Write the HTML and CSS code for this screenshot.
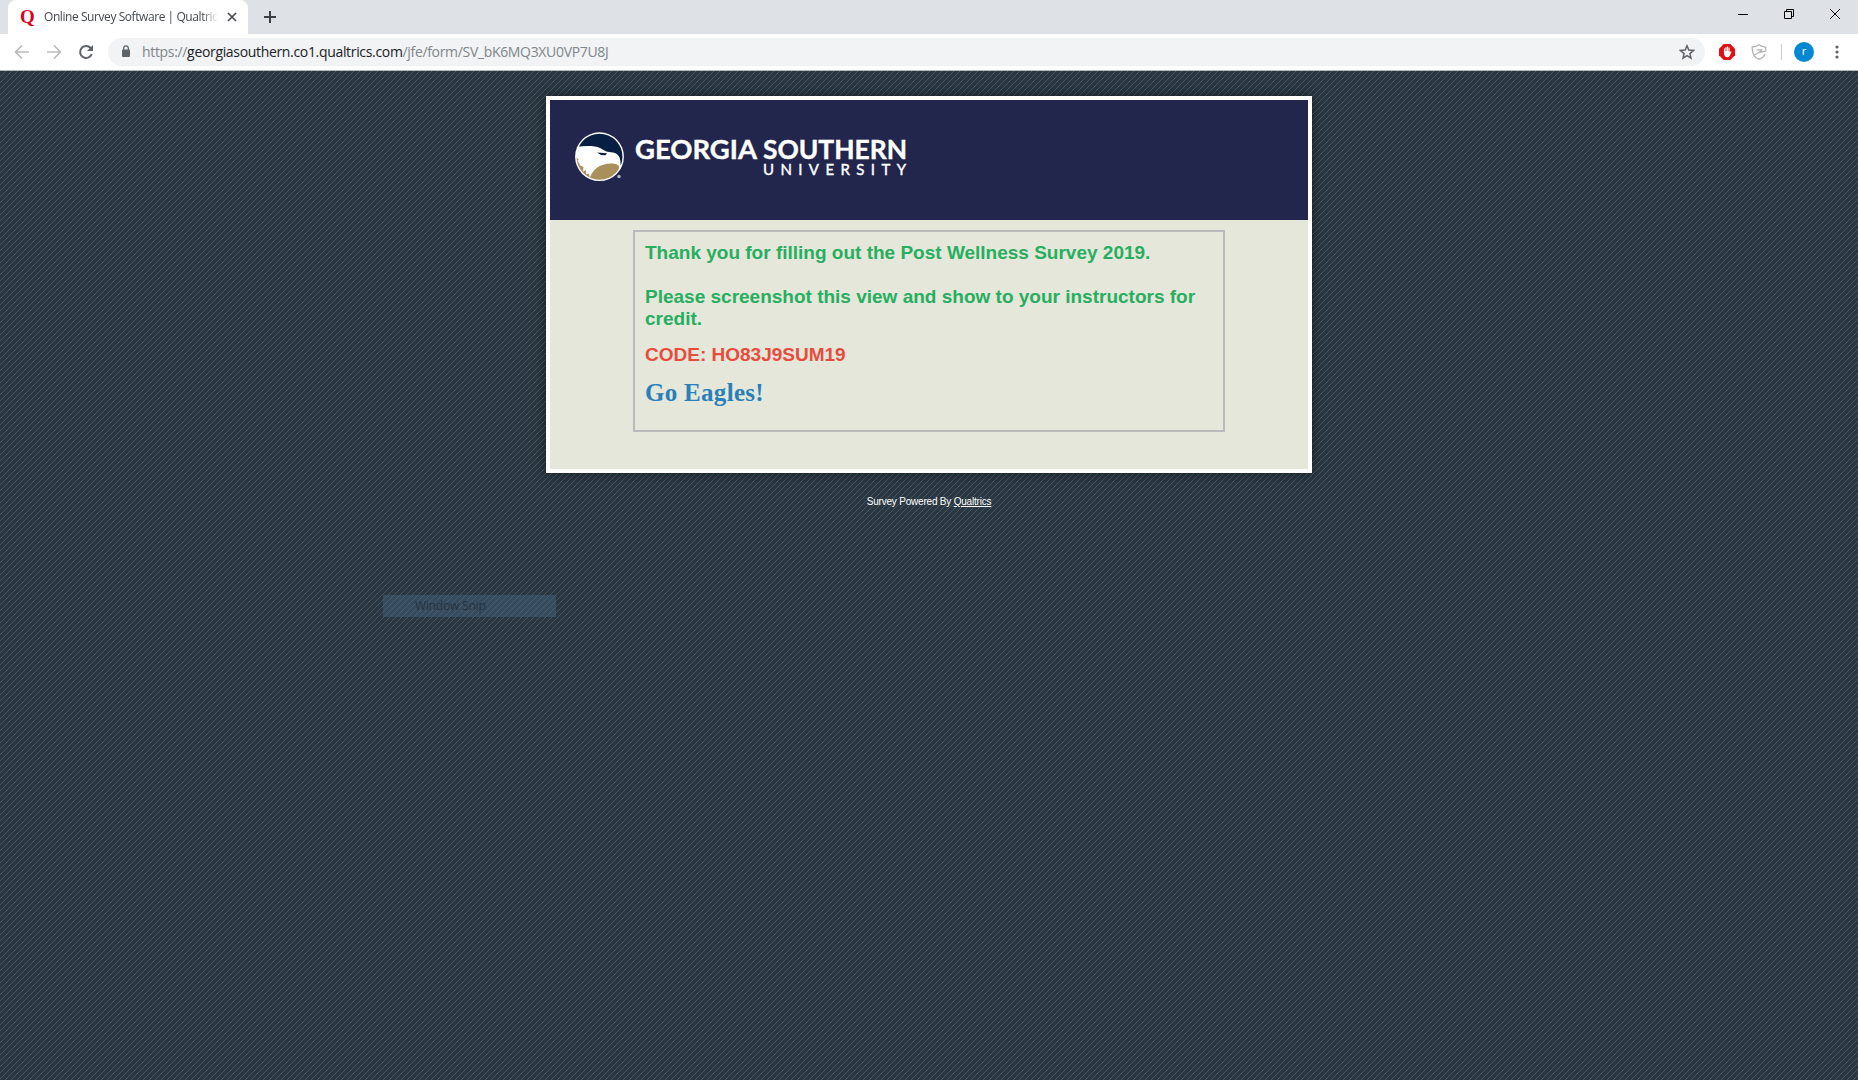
FILE: index.html
```html
<!DOCTYPE html>
<html lang="en">
<head>
<meta charset="utf-8">
<title>Online Survey Software | Qualtrics</title>
<link rel="stylesheet" href="styles.css">
</head>
<body>
<header class="tabstrip">
  <div class="tab">
    <span class="favicon">Q</span>
    <span class="tab-title">Online Survey Software | Qualtrics</span>
    <svg class="tab-close" width="10" height="10" viewBox="0 0 10 10"><path d="M1 1l8 8M9 1L1 9"/></svg>
  </div>
  <svg class="new-tab" width="12" height="12" viewBox="0 0 12 12"><path d="M6 0v12M0 6h12"/></svg>
  <div class="window-controls">
    <svg width="10" height="10" viewBox="0 0 10 10"><path d="M0 5.500h10"/></svg>
    <svg width="10" height="10" viewBox="0 0 10 10"><path d="M.5 2.500h7v7h-7zM2.500 2.500v-2h7v7h-2"/></svg>
    <svg width="10" height="10" viewBox="0 0 10 10"><path d="M0 0l10 10M10 0L0 10"/></svg>
  </div>
</header>
<nav class="toolbar">
  <svg class="nav-icon off" width="16" height="16" viewBox="0 0 16 16"><path d="M15 8H2M8 1.500L1.500 8 8 14.500"/></svg>
  <svg class="nav-icon off" width="16" height="16" viewBox="0 0 16 16"><path d="M1 8h13M8 1.500L14.500 8 8 14.500"/></svg>
  <svg class="nav-icon" width="16" height="16" viewBox="0 0 16 16"><path d="M13.700 10.200A6 6 0 1 1 12.400 3.800L14 5.500"/><path class="fill" d="M15 1v6H9z"/></svg>
  <div class="address">
    <svg width="10" height="13" viewBox="0 0 10 13"><rect x="1" y="4.500" width="8" height="7.500" rx="1" fill="#5f6368"/><path d="M2.700 5V3.200a2.300 2.300 0 0 1 4.600 0V5" fill="none" stroke="#5f6368" stroke-width="1.300"/></svg>
    <span class="url">https://<b>georgiasouthern.co1.qualtrics.com</b>/jfe/form/SV_bK6MQ3XU0VP7U8J</span>
    <svg class="star" width="16" height="16" viewBox="0 0 16 16"><path d="M8 1.800l1.800 4.300 4.700.4-3.600 3.100 1.100 4.600L8 11.700l-4 2.500 1.100-4.600L1.500 6.500l4.700-.4z"/></svg>
  </div>
  <div class="extensions">
    <svg width="16" height="16" viewBox="0 0 16 16"><path d="M4.700 0h6.600L16 4.700v6.600L11.300 16H4.700L0 11.300V4.700z" fill="#e40d13"/><path d="M4.900 7.500V4.600q.5-.7 1 0V7h.5V3.300q.6-.7 1.200 0V7H8V2.800q.6-.7 1.200 0V7h.4V3.800q.6-.7 1.100 0v4.700l1-1.200q.7-.2.800.5L10.700 12Q10 13.300 8.300 13.300q-2.300 0-3-2.300z" fill="#fff"/></svg>
    <svg width="16" height="16" viewBox="0 0 16 16" fill="none" stroke="#b5b5b5" stroke-width="1.300"><path d="M13.800 10C13 12.500 11 14.300 8 15.300 4 14 1 10.500 1.200 3 4 3 6.500 2 8 .8 9.500 2 12 3 14.600 3.200V6M3.500 11L8.500 8M5.500 5.800h5.200L8 8.500l7.500-1.700"/></svg>
    <span class="divider"></span>
    <span class="avatar">r</span>
    <svg class="more" width="4" height="14" viewBox="0 0 4 14"><circle cx="2" cy="2" r="1.600"/><circle cx="2" cy="7" r="1.600"/><circle cx="2" cy="12" r="1.600"/></svg>
  </div>
</nav>
<main class="page">
  <section class="survey">
    <div class="banner">
      <svg width="758" height="120" viewBox="0 0 758 120">
        <defs><clipPath id="disc"><circle cx="49.500" cy="56.700" r="23"/></clipPath></defs>
        <circle cx="49.500" cy="56.700" r="24.400" fill="#fff"/>
        <g clip-path="url(#disc)">
          <path d="M24 47.500C33 45.500 45 45.500 50 48c4 2.200 6 4 11 4.300 6 .4 10 3.500 9.500 12.700l5 2V28H24z" fill="#071f42"/>
          <path d="M47 52.500l10 .7-1.500 2-4.500-.3z" fill="#071f42"/>
          <path d="M39.500 80C41 70 50 63.500 61 63.500c6 0 8.500 1.300 8 4.500-1 7-9 13-18 13z" fill="#a98f5c"/>
          <path d="M25 56l4 4-1.500.5 2.500 4-1 .5 4.500 2-.5 4.500 3-1.500 0 4.500 3-1 1 6.500-8-2-9-12z" fill="#a98f5c"/>
        </g>
        <circle cx="69" cy="76.500" r="1.700" fill="#b9bac9"/>
        <text class="wordmark" x="85" y="58.600" textLength="122" lengthAdjust="spacingAndGlyphs">GEORGIA</text>
        <text class="wordmark" x="213" y="58.600" textLength="144" lengthAdjust="spacingAndGlyphs">SOUTHERN</text>
        <text class="subword" x="213" y="75" textLength="143">UNIVERSITY</text>
      </svg>
    </div>
    <div class="message">
      <h2 class="thanks">Thank you for filling out the Post Wellness Survey 2019.</h2>
      <h2 class="request">Please screenshot this view and show to your instructors for credit.</h2>
      <h2 class="code">CODE: HO83J9SUM19</h2>
      <h2 class="cheer">Go Eagles!</h2>
    </div>
  </section>
  <footer class="powered">Survey Powered By <a href="#">Qualtrics</a></footer>
  <div class="snip-menu">Window Snip</div>
</main>
</body>
</html>
```
FILE: styles.css
```css
* { box-sizing: border-box; }
body {
  margin: 0;
  height: 1080px;
  display: flex;
  flex-direction: column;
  overflow: hidden;
  font-family: "Noto Sans", "Open Sans", sans-serif;
}
svg { display: block; flex: none; }
.tabstrip {
  height: 34px;
  flex: none;
  background: #dee1e6;
  display: flex;
  padding-left: 8px;
}
.tab {
  width: 240px;
  background: #fff;
  border-radius: 8px 8px 0 0;
  display: flex;
  align-items: center;
  padding: 0 11px 0 12px;
}
.favicon {
  width: 24px;
  font: bold 19px/20px "Liberation Serif", serif;
  color: #e3001b;
}
.tab-title {
  width: 174px;
  overflow: hidden;
  white-space: nowrap;
  font: 12px/20px "Open Sans", sans-serif;
  letter-spacing: -.43px;
  color: #45494d;
  -webkit-mask-image: linear-gradient(90deg, #000 158px, transparent);
  mask-image: linear-gradient(90deg, #000 158px, transparent);
}
.tab-close { margin-left: auto; fill: none; stroke: #45494d; stroke-width: 1.6; }
.new-tab { margin: 11px 0 0 16px; stroke: #3c4043; stroke-width: 2; }
.window-controls { margin: 9px 18px 0 auto; display: flex; gap: 36px; fill: none; stroke: #000; stroke-width: 1; }
.toolbar {
  height: 37px;
  flex: none;
  display: flex;
  align-items: center;
  padding: 0 19px 1px 14px;
  border-bottom: 1px solid #b6b9bb;
  background: #fff;
}
.nav-icon { margin-right: 16px; fill: none; stroke: #5f6368; stroke-width: 2; }
.nav-icon.off { stroke: #bababa; stroke-width: 1.7; }
.nav-icon .fill { fill: #5f6368; stroke: none; }
.address {
  flex: 1;
  height: 28px;
  margin-left: -2px;
  border-radius: 14px;
  background: #f1f3f4;
  display: flex;
  align-items: center;
  padding: 0 10px 0 13px;
}
.url { margin-left: 11px; font: 14px/20px "Open Sans", sans-serif; letter-spacing: -.33px; color: #80868b; }
.url b { font-weight: 400; color: #202124; }
.star { margin-left: auto; fill: none; stroke: #5f6368; stroke-width: 1.5; }
.extensions { display: flex; align-items: center; margin-left: 14px; }
.extensions > svg + svg { margin-left: 16px; }
.divider { width: 1px; height: 16px; background: #c8cacc; margin: 0 12px 0 14px; }
.avatar {
  width: 20px;
  height: 20px;
  border-radius: 50%;
  background: #0288d1;
  color: #fff;
  font-size: 11px;
  line-height: 18px;
  text-align: center;
}
.extensions .more { margin-left: 21px; fill: #5f6368; }
.page {
  position: relative;
  flex: 1;
  padding-top: 25px;
  background: #2a3640 url("data:image/svg+xml,%3Csvg xmlns='http://www.w3.org/2000/svg' width='6' height='6' shape-rendering='crispEdges' fill='%23455762'%3E%3Crect x='5' y='0' width='1' height='1'/%3E%3Crect x='4' y='1' width='1' height='1'/%3E%3Crect x='3' y='2' width='1' height='1'/%3E%3Crect x='2' y='3' width='1' height='1'/%3E%3Crect x='1' y='4' width='1' height='1'/%3E%3Crect x='0' y='5' width='1' height='1'/%3E%3C/svg%3E");
}
.survey {
  width: 766px;
  height: 377px;
  margin: 0 auto;
  border: 4px solid #fff;
  background: #e5e7db;
  box-shadow: 0 0 10px rgba(0, 0, 0, .5);
}
.banner { height: 120px; background: #22254c; }
.wordmark { font: 700 26px Lato, sans-serif; fill: #fff; stroke: #fff; stroke-width: .4; }
.subword { font: 400 15px Lato, sans-serif; fill: #fff; stroke: #fff; stroke-width: .4; }
.message {
  width: 592px;
  height: 202px;
  margin: 10px auto 0 83px;
  padding: 10px;
  border: 2px solid #b9babb;
}
.message h2 { margin: 0; font: bold 19px/22px "Liberation Sans", Arial, sans-serif; color: #27ae60; }
.message .request { margin-top: 22px; }
.message .code { margin-top: 14px; color: #e74c3c; }
.message .cheer { margin-top: 14px; font: bold 25px/26px "Liberation Serif", Georgia, serif; letter-spacing: .3px; color: #2980b9; }
.powered {
  margin-top: 23px;
  text-align: center;
  font: 10px/12px "Liberation Sans", Arial, sans-serif;
  letter-spacing: -.2px;
  color: #fff;
}
.powered a { color: #fff; }
.snip-menu {
  position: absolute;
  left: 383px;
  top: 524px;
  width: 173px;
  height: 22px;
  padding-left: 32px;
  background: rgba(70, 103, 130, .45);
  font: 12px/22px "Open Sans", sans-serif;
  letter-spacing: -.2px;
  color: #26333f;
}
```
